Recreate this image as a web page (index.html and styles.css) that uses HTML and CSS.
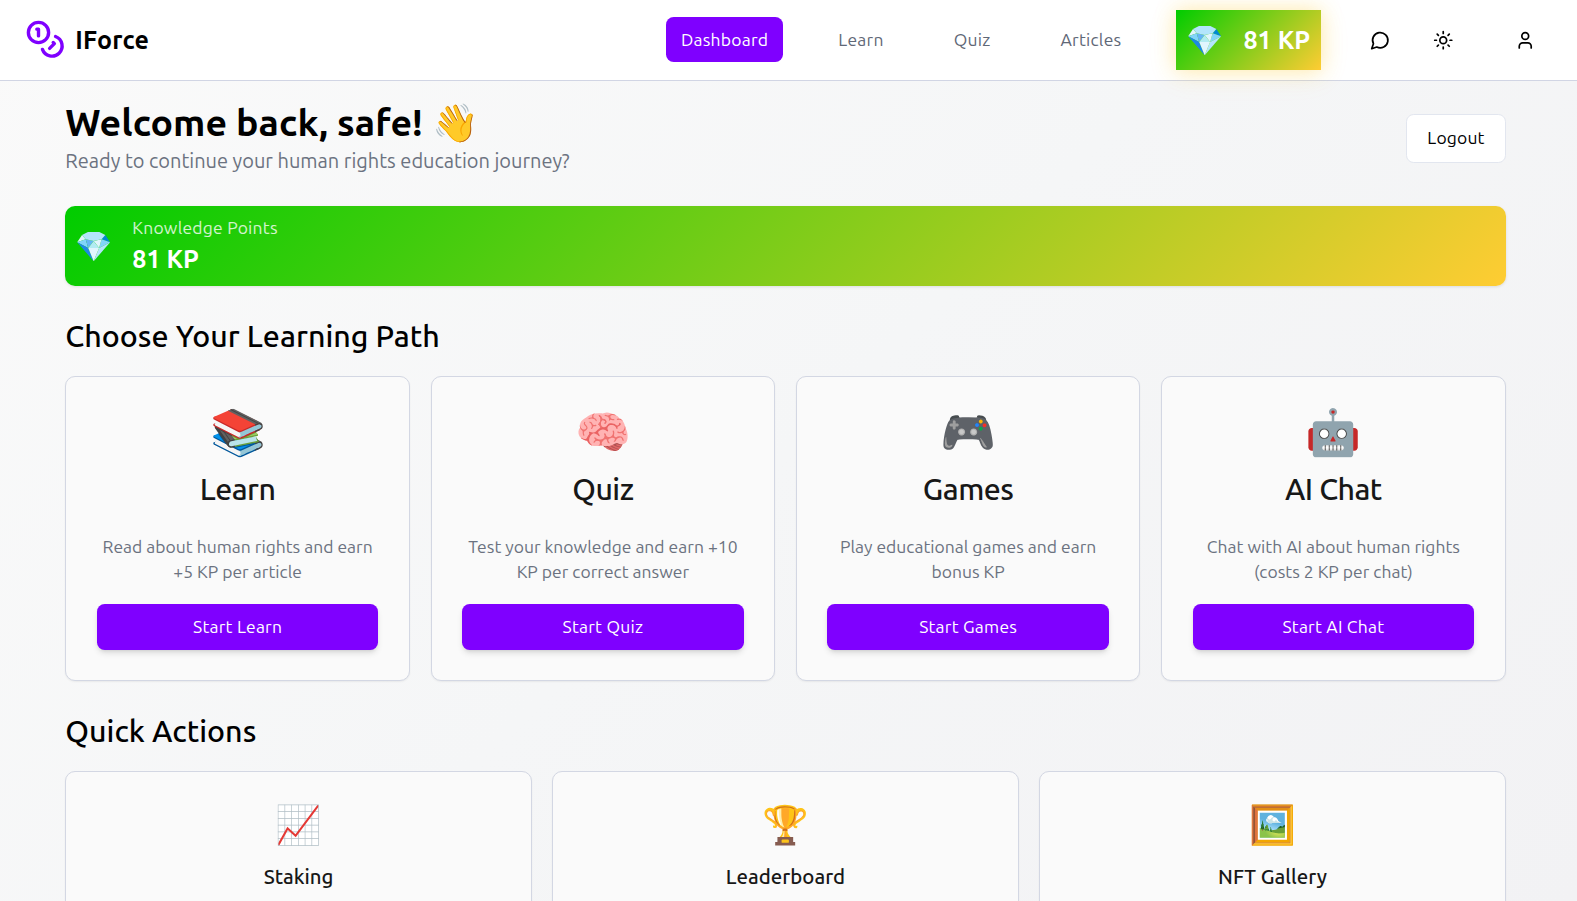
FILE: index.html
```html
<!DOCTYPE html>
<html lang="en">
<head>
<meta charset="utf-8">
<title>IForce</title>
<link rel="stylesheet" href="styles.css">
</head>
<body>
<header class="topbar">
  <a class="brand">
    <svg class="logo" viewBox="0 0 24 24"><circle cx="8" cy="8" r="6"/><path d="M18.09 10.37A6 6 0 1 1 10.34 18"/><path d="M7 6h1v4"/><path d="m16.71 13.88.7.71-2.82 2.82"/></svg>
    <span>IForce</span>
  </a>
  <nav class="nav">
    <a class="nav-link active">Dashboard</a>
    <a class="nav-link">Learn</a>
    <a class="nav-link">Quiz</a>
    <a class="nav-link">Articles</a>
  </nav>
  <div class="badge"><span class="gem">💎</span><span class="points">81 KP</span></div>
  <div class="tools">
    <svg class="icon" viewBox="0 0 24 24"><path d="M7.9 20A9 9 0 1 0 4 16.1L2 22Z"/></svg>
    <svg class="icon sun" viewBox="0 0 24 24"><circle cx="12" cy="12" r="4"/><path d="M12 2v2"/><path d="M12 20v2"/><path d="m4.93 4.93 1.41 1.41"/><path d="m17.66 17.66 1.41 1.41"/><path d="M2 12h2"/><path d="M20 12h2"/><path d="m6.34 17.66-1.41 1.41"/><path d="m19.07 4.93-1.41 1.41"/></svg>
    <svg class="icon user" viewBox="0 0 24 24"><path d="M19 21v-2a4 4 0 0 0-4-4H9a4 4 0 0 0-4 4v2"/><circle cx="12" cy="7" r="4"/></svg>
  </div>
</header>
<main class="page">
  <section class="welcome">
    <div>
      <h1>Welcome back, safe! 👋</h1>
      <p class="lead">Ready to continue your human rights education journey?</p>
    </div>
    <button class="logout">Logout</button>
  </section>
  <section class="kp-card">
    <span class="gem">💎</span>
    <div>
      <p class="kp-label">Knowledge Points</p>
      <p class="points">81 KP</p>
    </div>
  </section>
  <section>
    <h2>Choose Your Learning Path</h2>
    <div class="grid paths">
      <article class="card"><div class="emoji">📚</div><h3>Learn</h3><p>Read about human rights and earn +5 KP per article</p><button class="start">Start Learn</button></article>
      <article class="card"><div class="emoji">🧠</div><h3>Quiz</h3><p>Test your knowledge and earn +10 KP per correct answer</p><button class="start">Start Quiz</button></article>
      <article class="card"><div class="emoji">🎮</div><h3>Games</h3><p>Play educational games and earn bonus KP</p><button class="start">Start Games</button></article>
      <article class="card"><div class="emoji">🤖</div><h3>AI Chat</h3><p>Chat with AI about human rights (costs 2 KP per chat)</p><button class="start">Start AI Chat</button></article>
    </div>
  </section>
  <section>
    <h2>Quick Actions</h2>
    <div class="grid actions">
      <article class="card"><div class="emoji">📈</div><h4>Staking</h4></article>
      <article class="card"><div class="emoji">🏆</div><h4>Leaderboard</h4></article>
      <article class="card"><div class="emoji">🖼️</div><h4>NFT Gallery</h4></article>
    </div>
  </section>
</main>
</body>
</html>
```
FILE: styles.css
```css
* { box-sizing: border-box; margin: 0; }
html { font-size: 20px; }
body {
  height: 901px;
  overflow: hidden;
  font-family: Ubuntu, "Noto Sans", sans-serif;
  font-weight: 400;
  line-height: 1.4;
  color: #000;
  background: linear-gradient(135deg, #fafafa, #f5f6f7 50%, #f2f2f4);
}
button { font: inherit; border: 0; padding: 0; }
svg { fill: none; stroke: currentColor; stroke-width: 2; stroke-linecap: round; stroke-linejoin: round; }

.topbar {
  display: flex;
  align-items: center;
  height: 81px;
  padding: 0 41.5px 0 25.3px;
  background: #fff;
  border-bottom: 1px solid #d1d5e4;
}
.brand { display: flex; align-items: center; gap: 9.5px; font-size: 1.25rem; font-weight: 700; letter-spacing: .2px; }
.logo { width: 40.5px; height: 40.5px; margin-top: -1px; color: #7f00ff; }
.nav { display: flex; gap: 2rem; margin: -1px 0 0 auto; }
.nav-link {
  padding: 0 .75rem;
  border-radius: 7.7px;
  font-size: .875rem;
  font-weight: 400;
  letter-spacing: .23px;
  line-height: 45px;
  color: #5f6877;
}
.nav-link.active { color: #fff; background: #7f00ff; }
.badge {
  display: flex;
  align-items: center;
  justify-content: space-between;
  width: 144.7px;
  height: 60.5px;
  margin-left: 2rem;
  padding: 0 11px 0 10px;
  color: #fff;
  background: linear-gradient(135deg, #00cc00, #ffcc33);
  box-shadow: 0 0 20px rgba(255, 204, 51, .35), 0 4px 30px rgba(255, 204, 51, .12);
}
.gem { font-size: 1.5rem; line-height: 1; }
.points { font-size: 1.25rem; font-weight: 700; line-height: 1.4; }
.tools { display: flex; align-items: center; margin-left: 49px; }
.icon { width: 20.48px; height: 20.48px; }
.sun { margin-left: 42.5px; }
.user { margin-left: 61.5px; }

.page { display: flex; flex-direction: column; gap: 28.67px; padding: 17.5px 71.3px 0 65.3px; }
.welcome { display: flex; align-items: center; justify-content: space-between; height: 79px; }
h1 { height: 47px; font-size: 1.875rem; font-weight: 700; line-height: 47px; letter-spacing: .05px; white-space: nowrap; }
.lead { height: 31px; line-height: 29px; color: #6b7280; }
.logout {
  width: 99.5px;
  height: 49.7px;
  margin-top: 1px;
  font-size: .875rem;
  font-weight: 400;
  letter-spacing: .15px;
  background: #fff;
  border: 1px solid #e2e6ef;
  border-radius: 7.7px;
}
.kp-card {
  display: flex;
  align-items: center;
  gap: 20px;
  height: 80px;
  padding-left: .5rem;
  color: #fff;
  background: linear-gradient(135deg, #00cc00, #ffcc33);
  border-radius: 10px;
  box-shadow: 0 1px 3px rgba(0, 0, 0, .1);
}
.kp-label { margin-bottom: 4px; font-size: .875rem; letter-spacing: .22px; opacity: .8; }
.kp-label + .points { line-height: 32px; margin: -2px 0 1px; }
h2 { padding-top: 1px; margin-bottom: 20.5px; font-size: 30.4px; font-weight: 500; line-height: 40px; }
.grid { display: grid; gap: 20.6px; }
.paths { grid-template-columns: repeat(4, 1fr); }
.actions { grid-template-columns: repeat(3, 1fr); }
.card {
  padding: 30.5px;
  text-align: center;
  background: #fafafa;
  border: 1px solid #d3d7e3;
  border-radius: 10px;
  box-shadow: 0 1px 2px rgba(0, 0, 0, .06);
}
.paths .card { height: 304.8px; }
.actions .card { height: 240px; }
.emoji { height: 61.2px; font-size: 2.25rem; line-height: 48px; }
.actions .emoji { height: 60.2px; font-size: 1.875rem; line-height: 42.5px; }
h3 { margin-bottom: 23.3px; font-size: 30.3px; font-weight: 500; line-height: 41.5px; letter-spacing: -.55px; color: #171717; }
h4 { font-size: 20.4px; font-weight: 500; line-height: 28px; color: #171717; }
.card p { margin-bottom: 20.7px; font-size: .875rem; line-height: 25px; color: #6b7280; }
.start {
  display: block;
  width: 100%;
  height: 45.2px;
  font-size: .875rem;
  font-weight: 400;
  letter-spacing: .22px;
  color: #fff;
  background: #7f00ff;
  border-radius: 7.7px;
  box-shadow: 0 4px 6px -1px rgba(0, 0, 0, .12), 0 2px 4px -2px rgba(0, 0, 0, .12);
}
```
